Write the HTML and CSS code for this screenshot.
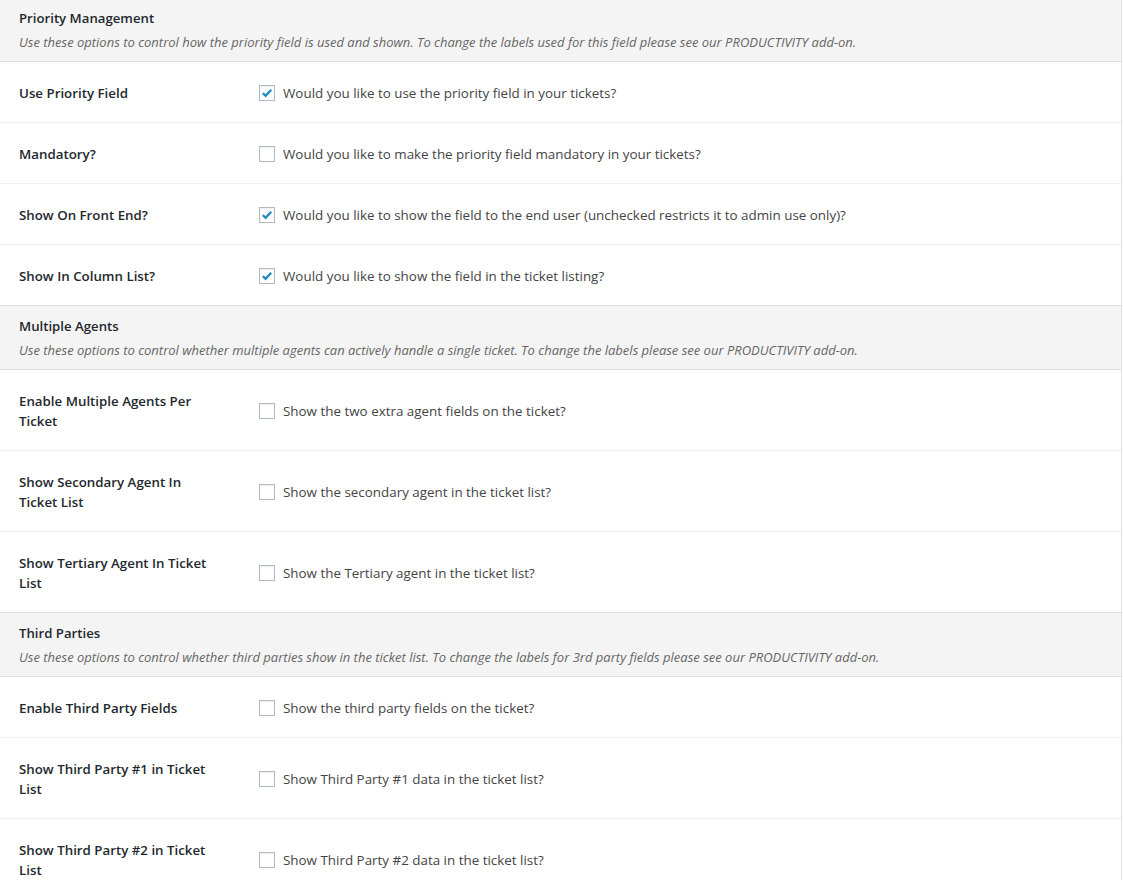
FILE: index.html
```html
<!DOCTYPE html>
<html lang="en">
<head>
<meta charset="utf-8">
<title>Settings</title>
<link rel="stylesheet" href="styles.css">
</head>
<body>
<div class="settings">

  <div class="section-head">
    <div class="section-title">Priority Management</div>
    <div class="section-desc">Use these options to control how the priority field is used and shown. To change the labels used for this field please see our PRODUCTIVITY add-on.</div>
  </div>
  <div class="row">
    <div class="label">Use Priority Field</div>
    <div class="value"><span class="cb checked"><svg viewBox="0 0 16 16"><polyline points="3.2,8.2 6.4,11.2 12.8,4.2"/></svg></span><span class="vtext">Would you like to use the priority field in your tickets?</span></div>
  </div>
  <div class="row">
    <div class="label">Mandatory?</div>
    <div class="value"><span class="cb"></span><span class="vtext">Would you like to make the priority field mandatory in your tickets?</span></div>
  </div>
  <div class="row">
    <div class="label">Show On Front End?</div>
    <div class="value"><span class="cb checked"><svg viewBox="0 0 16 16"><polyline points="3.2,8.2 6.4,11.2 12.8,4.2"/></svg></span><span class="vtext">Would you like to show the field to the end user (unchecked restricts it to admin use only)?</span></div>
  </div>
  <div class="row">
    <div class="label">Show In Column List?</div>
    <div class="value"><span class="cb checked"><svg viewBox="0 0 16 16"><polyline points="3.2,8.2 6.4,11.2 12.8,4.2"/></svg></span><span class="vtext">Would you like to show the field in the ticket listing?</span></div>
  </div>

  <div class="section-head">
    <div class="section-title">Multiple Agents</div>
    <div class="section-desc">Use these options to control whether multiple agents can actively handle a single ticket. To change the labels please see our PRODUCTIVITY add-on.</div>
  </div>
  <div class="row">
    <div class="label">Enable Multiple Agents Per Ticket</div>
    <div class="value"><span class="cb"></span><span class="vtext">Show the two extra agent fields on the ticket?</span></div>
  </div>
  <div class="row">
    <div class="label">Show Secondary Agent In Ticket List</div>
    <div class="value"><span class="cb"></span><span class="vtext">Show the secondary agent in the ticket list?</span></div>
  </div>
  <div class="row">
    <div class="label">Show Tertiary Agent In Ticket List</div>
    <div class="value"><span class="cb"></span><span class="vtext">Show the Tertiary agent in the ticket list?</span></div>
  </div>

  <div class="section-head">
    <div class="section-title">Third Parties</div>
    <div class="section-desc">Use these options to control whether third parties show in the ticket list. To change the labels for 3rd party fields please see our PRODUCTIVITY add-on.</div>
  </div>
  <div class="row">
    <div class="label">Enable Third Party Fields</div>
    <div class="value"><span class="cb"></span><span class="vtext">Show the third party fields on the ticket?</span></div>
  </div>
  <div class="row">
    <div class="label">Show Third Party #1 in Ticket List</div>
    <div class="value"><span class="cb"></span><span class="vtext">Show Third Party #1 data in the ticket list?</span></div>
  </div>
  <div class="row">
    <div class="label">Show Third Party #2 in Ticket List</div>
    <div class="value"><span class="cb"></span><span class="vtext">Show Third Party #2 data in the ticket list?</span></div>
  </div>

</div>
</body>
</html>
```

FILE: styles.css
```css
html, body {
  margin: 0;
  padding: 0;
  background: #ffffff;
}

body {
  font-family: "Open Sans", "Noto Sans", "Liberation Sans", sans-serif;
  color: #23282d;
  overflow: hidden;
}

.settings {
  width: 1121px;
  margin-top: -3px;
  border-right: 1px solid #e1e1e1;
  background: #ffffff;
}

.section-head {
  background: #f4f4f4;
  border-top: 1px solid #dedede;
  border-bottom: 1px solid #dedede;
  padding: 10px 19px 9px;
}

.section-title {
  font-size: 13.2px;
  font-weight: 600;
  line-height: 20px;
  color: #23282d;
}

.section-desc {
  margin-top: 4px;
  font-size: 13px;
  font-style: italic;
  line-height: 20px;
  color: #666666;
}

.row {
  display: grid;
  grid-template-columns: 259px 1fr;
}

.row + .row {
  border-top: 1px solid #f0f0f0;
}

.label {
  padding: 21px 45px 19px 19px;
  font-size: 13.3px;
  font-weight: 600;
  line-height: 20px;
  color: #23282d;
}

.value {
  display: flex;
  align-items: center;
  gap: 8px;
  padding-top: 1px;
  font-size: 13.4px;
  color: #444444;
}

.cb {
  box-sizing: border-box;
  width: 16px;
  height: 16px;
  border: 1px solid #b4b9be;
  background: #ffffff;
  box-shadow: inset 0 1px 2px rgba(0, 0, 0, 0.07);
  display: flex;
  align-items: center;
  justify-content: center;
  flex: none;
}

.cb svg {
  width: 14px;
  height: 14px;
  fill: none;
  stroke: #1e8cbe;
  stroke-width: 2.6;
  stroke-linecap: butt;
  stroke-linejoin: miter;
}

.vtext {
  line-height: 20px;
}
```
